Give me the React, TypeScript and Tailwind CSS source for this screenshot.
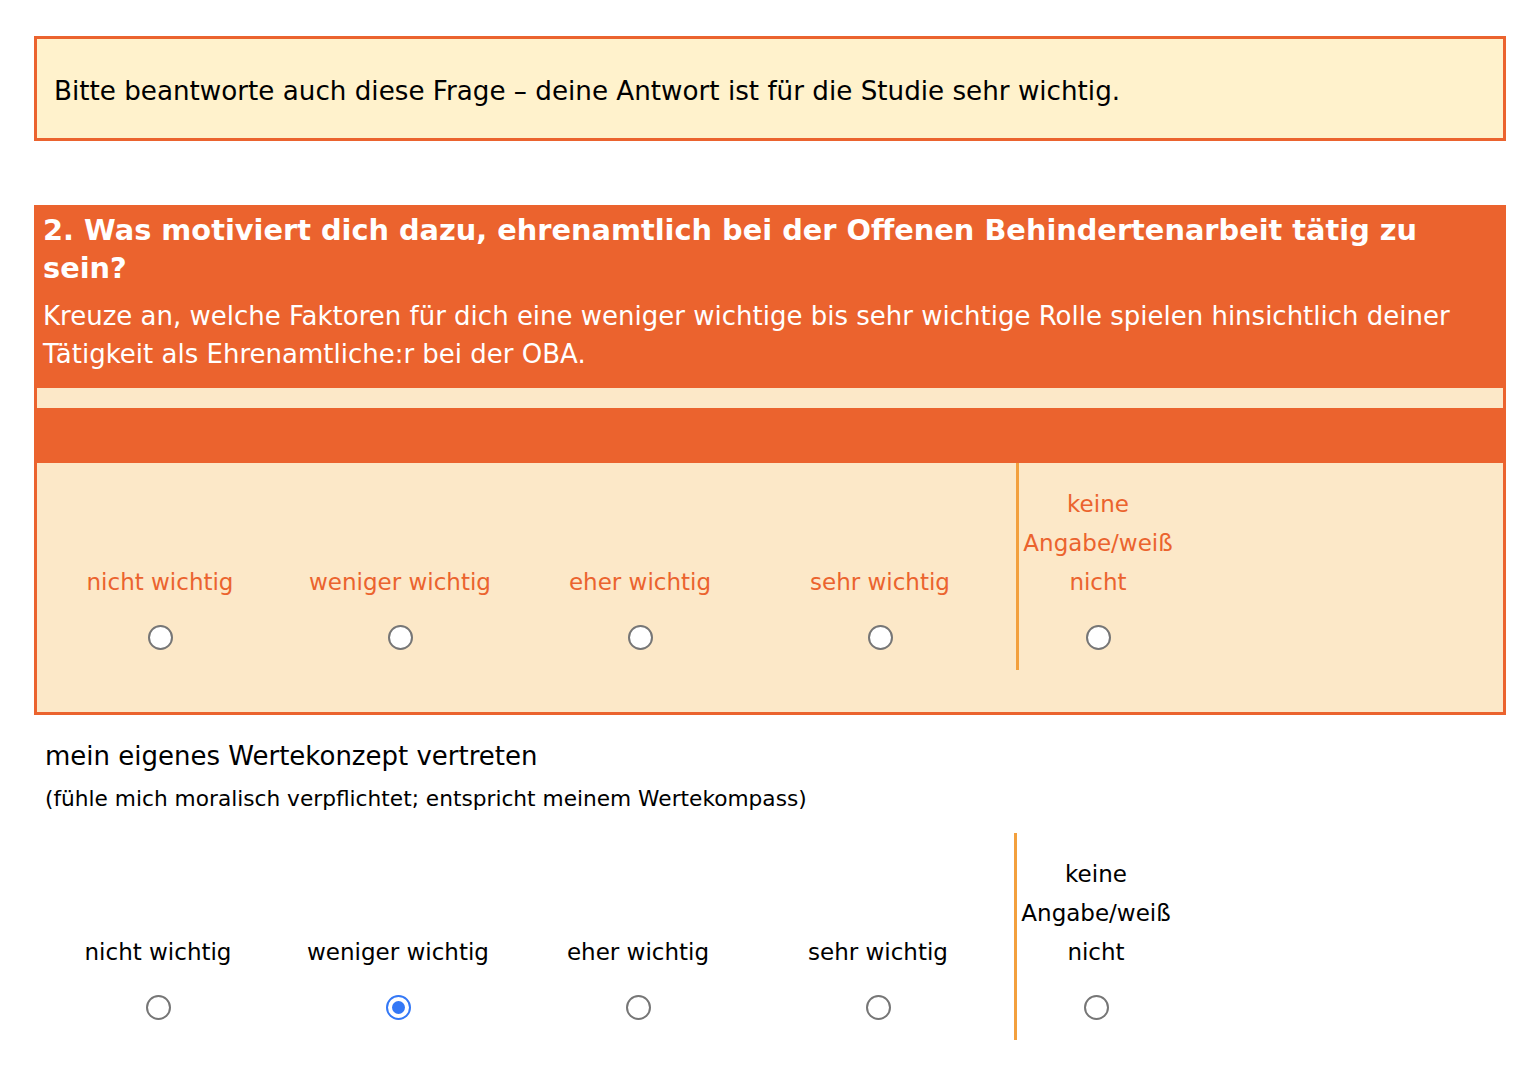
import { useState } from 'react'

const ORANGE = 'border-[#eb632e]'
const OPTIONS = ['nicht wichtig', 'weniger wichtig', 'eher wichtig', 'sehr wichtig']

// ---- Radio ----
const Radio = ({ checked, onClick }: { checked?: boolean; onClick?: () => void }) => (
  <button
    type="button"
    onClick={onClick}
    className={`w-[25px] h-[25px] rounded-full border-2 bg-white flex items-center justify-center ${
      checked ? 'border-[#3478f6]' : 'border-[#767676]'
    }`}
  >
    {checked && <span className="w-[13px] h-[13px] rounded-full bg-[#3478f6]" />}
  </button>
)

// ---- Scale row ----
const Scale = ({ tone, value, onChange }: { tone: 'orange' | 'black'; value: number | null; onChange?: (i: number) => void }) => {
  const text = tone === 'orange' ? 'text-[#eb632e]' : 'text-black'
  return (
    <div className={`flex ${text} text-[23px] leading-[39px]`}>
      {OPTIONS.map((o, i) => (
        <div key={o} className="w-[240px] flex flex-col items-center justify-end pt-[22px] pb-[20px]">
          <span className="whitespace-nowrap">{o}</span>
          <div className="mt-[23px] h-[25px]">
            <Radio checked={value === i} onClick={() => onChange?.(i)} />
          </div>
        </div>
      ))}
      <div className="ml-[16px] border-l-[3px] border-[#f3a03d] w-[161px] flex flex-col items-center justify-end pt-[22px] pb-[20px]">
        <span className="text-center w-[158px]">keine Angabe/weiß nicht</span>
        <div className="mt-[23px] h-[25px]">
          <Radio checked={value === 4} onClick={() => onChange?.(4)} />
        </div>
      </div>
    </div>
  )
}

export default function App() {
  const [answer, setAnswer] = useState<number | null>(1)

  return (
    <div className="min-h-screen bg-white pt-[36px] pb-[38px] font-['DejaVu_Sans',sans-serif]">
      {/* Reminder */}
      <div className={`ml-[34px] w-[1472px] border-[3px] ${ORANGE} bg-[#fff2cc] px-[17px] pt-[35px] pb-[29px]`}>
        <p className="text-[26.2px] leading-[35px] text-black">
          Bitte beantworte auch diese Frage – deine Antwort ist für die Studie sehr wichtig.
        </p>
      </div>

      {/* Question */}
      <div className={`ml-[34px] w-[1472px] mt-[64px] border-[3px] ${ORANGE} bg-[#fce8c8]`}>
        <div className="bg-[#eb632e] px-[6px] pt-[3px] pb-[15px] text-white">
          <h2 className="text-[28.8px] leading-[38px] font-bold">
            2. Was motiviert dich dazu, ehrenamtlich bei der Offenen Behindertenarbeit tätig zu sein?
          </h2>
          <p className="text-[26px] leading-[38px] mt-[10px]">
            Kreuze an, welche Faktoren für dich eine weniger wichtige bis sehr wichtige Rolle spielen hinsichtlich deiner Tätigkeit als Ehrenamtliche:r bei der OBA.
          </p>
        </div>
        <div className="h-[20px]" />
        <div className="h-[55px] bg-[#eb632e]" />
        <div className="pl-[3px] pb-[42px]">
          <Scale tone="orange" value={null} />
        </div>
      </div>

      {/* Item */}
      <div className="ml-[34px] w-[1472px] mt-[22px]">
        <div className="pl-[11px]">
          <p className="text-[26px] leading-[38px] text-black">mein eigenes Wertekonzept vertreten</p>
          <p className="text-[21.7px] leading-[30px] text-black mt-[9px]">
            (fühle mich moralisch verpflichtet; entspricht meinem Wertekompass)
          </p>
        </div>
        <div className="pl-[4px] mt-[19px]">
          <Scale tone="black" value={answer} onChange={setAnswer} />
        </div>
      </div>
    </div>
  )
}
